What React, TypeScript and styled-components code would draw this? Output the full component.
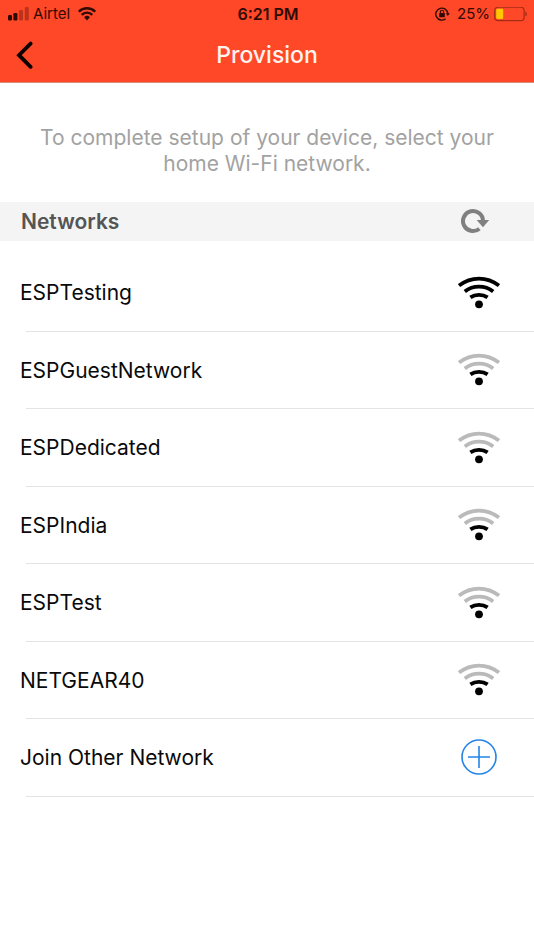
import React from "react";
import styled, { createGlobalStyle } from "styled-components";

const GlobalStyle = createGlobalStyle`
  * { box-sizing: border-box; }
  body {
    margin: 0;
    background: #ffffff;
    color: #0a0a0a;
    font-family: Inter, "Liberation Sans", sans-serif;
  }
  button { font: inherit; color: inherit; background: none; border: 0; padding: 0; cursor: pointer; }
  svg { display: block; flex: none; }
`;

const Header = styled.header`
  background: #ff4827;
  border-bottom: 1px solid #dc8a7c;
`;

const StatusBar = styled.div`
  display: grid;
  grid-template-columns: 1fr auto 1fr;
  align-items: center;
  height: 28px;
  padding: 0 6px 0 8px;
  font-size: 15px;
  line-height: 20px;
  color: #300a04;
`;

const StatusGroup = styled.div<{ $end?: boolean }>`
  display: flex;
  align-items: center;
  justify-content: ${(p) => (p.$end ? "flex-end" : "flex-start")};
  gap: ${(p) => (p.$end ? 4 : 8)}px;
`;

const Carrier = styled.span`
  display: flex;
  align-items: center;
  gap: 4px;
`;

const Percent = styled.span`
  margin-left: 3px;
`;

const Clock = styled.time`
  font-size: 16px;
  font-weight: 600;
`;

const NavBar = styled.div`
  display: grid;
  grid-template-columns: 44px 1fr 44px;
  align-items: center;
  height: 54px;
  padding-bottom: 1px;
`;

const BackButton = styled.button`
  display: flex;
  align-items: center;
  height: 44px;
  padding-left: 16px;
`;

const Title = styled.h1`
  margin: 0;
  font-size: 23px;
  line-height: 32px;
  font-weight: 500;
  text-align: center;
  color: #fff3ef;
`;

const Intro = styled.p`
  margin: 0;
  padding: 42px 40px 25px;
  font-size: 21px;
  line-height: 26px;
  text-align: center;
  color: #a2a2a2;
`;

const SectionBar = styled.div`
  display: flex;
  align-items: center;
  justify-content: space-between;
  height: 39px;
  padding: 0 44px 0 21px;
  background: #f4f4f4;
`;

const SectionTitle = styled.h2`
  margin: 0;
  font-size: 21px;
  line-height: 29px;
  font-weight: 600;
  color: #555555;
`;

const NetworkList = styled.ul`
  list-style: none;
  margin: 0;
  padding: 13px 0 0;
`;

const NetworkItem = styled.li`
  display: flex;
  flex-direction: column;
  min-height: 77px;
  &:nth-child(odd) { min-height: 78px; }
  &::after {
    content: "";
    height: 1px;
    margin-left: 26px;
    background: #e4e4e6;
  }
`;

const NetworkButton = styled.button`
  display: flex;
  flex: 1;
  align-items: center;
  justify-content: space-between;
  width: 100%;
  padding: 0 33px 0 20px;
  font-size: 21px;
  line-height: 29px;
  text-align: left;
`;

const IconSlot = styled.span`
  display: flex;
  justify-content: center;
  width: 44px;
`;

const CellularIcon = () => (
  <svg width="21" height="14" viewBox="0 0 21 14" fill="#300a04" aria-hidden="true">
    <rect x="0" y="8" width="4" height="5.5" rx="1.2" />
    <rect x="5.4" y="6" width="4" height="7.5" rx="1.2" />
    <rect x="11" y="3" width="4" height="10.5" rx="1.2" opacity=".32" />
    <rect x="16.8" y="0" width="4" height="13.5" rx="1.2" opacity=".32" />
  </svg>
);

const StatusWifiIcon = () => (
  <svg width="18" height="14" viewBox="0 0 18 14" fill="none" stroke="#300a04" strokeWidth="2.4" aria-hidden="true">
    <path d="M.8 4.7a11.6 11.6 0 0 1 16.4 0M3.7 7.8a7.5 7.5 0 0 1 10.6 0" />
    <path d="M6.1 10.3a4.1 4.1 0 0 1 5.8 0L9 13.4z" fill="#300a04" stroke="none" />
  </svg>
);

const OrientationLockIcon = () => (
  <svg width="15" height="14" viewBox="0 0 15 14" fill="none" stroke="#300a04" strokeWidth="1.4" aria-hidden="true">
    <path d="M10.6 11.8A6 6 0 1 1 12.8 6.5" />
    <path d="M10.7 6.2h4.2l-2.1 2.9z" fill="#300a04" stroke="none" />
    <rect x="4.2" y="6" width="5.6" height="4.2" rx=".6" fill="#300a04" stroke="none" />
    <path d="M5.4 6V4.8a1.6 1.6 0 0 1 3.2 0V6" strokeWidth="1.1" />
  </svg>
);

const BatteryIcon = () => (
  <svg width="34" height="15" viewBox="0 0 34 15" aria-hidden="true">
    <rect x=".7" y=".2" width="29.4" height="13.4" rx="3.4" fill="none" stroke="#a52c16" strokeWidth="1.2" />
    <rect x="2.2" y="1.7" width="7" height="10.4" rx="1.4" fill="#ffc800" />
    <path d="M31.4 4.6c2 .7 2 4.3 0 5z" fill="#a52c16" />
  </svg>
);

const BackIcon = () => (
  <svg width="18" height="28" viewBox="0 0 18 28" fill="none" stroke="#0c0100" strokeWidth="3.8" strokeLinecap="round" strokeLinejoin="miter" aria-hidden="true">
    <path d="M14.6 2.6 3 14.2l11.6 11.6" />
  </svg>
);

const RefreshIcon = () => (
  <svg width="29" height="27" viewBox="0 0 29 27" aria-hidden="true">
    <path d="M18.4 20.7A10 10 0 1 1 22 13" fill="none" stroke="#808080" strokeWidth="4" />
    <path d="M15.6 12h12.6l-6.2 7.2z" fill="#808080" />
  </svg>
);

const SignalIcon = ({ strong }: { strong: boolean }) => {
  const outer = strong ? "#000000" : "#bababa";
  return (
    <svg width="42" height="34" viewBox="0 0 42 34" fill="none" strokeWidth="3.8" aria-hidden="true">
      <path d="M1 9.6C13 .2 29 .2 41 9.6" stroke={outer} />
      <path d="M6.8 15.4C15 9 27 9 35.2 15.4" stroke={outer} />
      <path d="M12.4 21.4c5-3.5 12.2-3.5 17.2 0" stroke="#000000" />
      <circle cx="21" cy="28.3" r="3.9" fill="#000000" />
    </svg>
  );
};

const AddIcon = () => (
  <svg width="36" height="37" viewBox="0 0 36 37" fill="none" stroke="#2384e8" strokeWidth="1.6" aria-hidden="true">
    <circle cx="18" cy="18" r="17" />
    <path d="M18 7v22M7 18h22" />
  </svg>
);

const networks = [
  { name: "ESPTesting", strong: true },
  { name: "ESPGuestNetwork", strong: false },
  { name: "ESPDedicated", strong: false },
  { name: "ESPIndia", strong: false },
  { name: "ESPTest", strong: false },
  { name: "NETGEAR40", strong: false },
];

export default function App() {
  return (
    <>
      <GlobalStyle />
      <Header>
        <StatusBar>
          <StatusGroup>
            <Carrier>
              <CellularIcon />
              Airtel
            </Carrier>
            <StatusWifiIcon />
          </StatusGroup>
          <Clock>6:21 PM</Clock>
          <StatusGroup $end>
            <OrientationLockIcon />
            <Percent>25%</Percent>
            <BatteryIcon />
          </StatusGroup>
        </StatusBar>
        <NavBar>
          <BackButton type="button" aria-label="Back">
            <BackIcon />
          </BackButton>
          <Title>Provision</Title>
        </NavBar>
      </Header>
      <main>
        <Intro>To complete setup of your device, select your home Wi-Fi network.</Intro>
        <SectionBar>
          <SectionTitle>Networks</SectionTitle>
          <button type="button" aria-label="Refresh networks">
            <RefreshIcon />
          </button>
        </SectionBar>
        <NetworkList>
          {networks.map((n) => (
            <NetworkItem key={n.name}>
              <NetworkButton type="button">
                {n.name}
                <IconSlot>
                  <SignalIcon strong={n.strong} />
                </IconSlot>
              </NetworkButton>
            </NetworkItem>
          ))}
          <NetworkItem>
            <NetworkButton type="button">
              Join Other Network
              <IconSlot>
                <AddIcon />
              </IconSlot>
            </NetworkButton>
          </NetworkItem>
        </NetworkList>
      </main>
    </>
  );
}
